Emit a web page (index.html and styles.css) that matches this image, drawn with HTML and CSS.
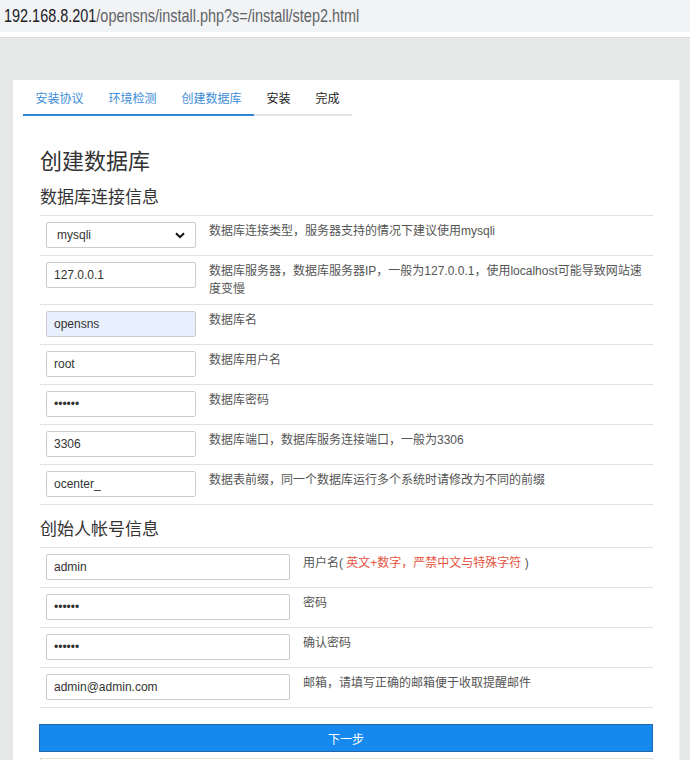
FILE: index.html
```html
<!DOCTYPE html>
<html lang="zh-CN">
<head>
<meta charset="utf-8">
<title>OpenSNS 安装 - 创建数据库</title>
<link rel="stylesheet" href="styles.css">
</head>
<body>
<div class="urlbar"><span class="url"><span class="host">192.168.8.201</span>/opensns/install.php?s=/install/step2.html</span></div>
<div class="urlgap"></div>
<div class="page">
  <div class="card">
    <ul class="steps">
      <li class="done">安装协议</li>
      <li class="done">环境检测</li>
      <li class="done">创建数据库</li>
      <li>安装</li>
      <li>完成</li>
    </ul>
    <div class="content">
      <h2 class="title">创建数据库</h2>
      <h3 class="section">数据库连接信息</h3>
      <table class="form-table db">
        <tr>
          <td class="field"><select class="control select"><option>mysqli</option></select></td>
          <td class="desc">数据库连接类型，服务器支持的情况下建议使用mysqli</td>
        </tr>
        <tr class="tall">
          <td class="field"><input class="control" type="text" value="127.0.0.1"></td>
          <td class="desc">数据库服务器，数据库服务器IP，一般为127.0.0.1，使用localhost可能导致网站速度变慢</td>
        </tr>
        <tr>
          <td class="field"><input class="control autofill" type="text" value="opensns"></td>
          <td class="desc">数据库名</td>
        </tr>
        <tr>
          <td class="field"><input class="control" type="text" value="root"></td>
          <td class="desc">数据库用户名</td>
        </tr>
        <tr>
          <td class="field"><input class="control" type="password" value="123456"></td>
          <td class="desc">数据库密码</td>
        </tr>
        <tr>
          <td class="field"><input class="control" type="text" value="3306"></td>
          <td class="desc">数据库端口，数据库服务连接端口，一般为3306</td>
        </tr>
        <tr>
          <td class="field"><input class="control" type="text" value="ocenter_"></td>
          <td class="desc">数据表前缀，同一个数据库运行多个系统时请修改为不同的前缀</td>
        </tr>
      </table>
      <h3 class="section section-2">创始人帐号信息</h3>
      <table class="form-table admin">
        <tr>
          <td class="field"><input class="control" type="text" value="admin"></td>
          <td class="desc">用户名( <span class="warn">英文+数字，严禁中文与特殊字符</span> )</td>
        </tr>
        <tr>
          <td class="field"><input class="control" type="password" value="123456"></td>
          <td class="desc">密码</td>
        </tr>
        <tr>
          <td class="field"><input class="control" type="password" value="123456"></td>
          <td class="desc">确认密码</td>
        </tr>
        <tr>
          <td class="field"><input class="control" type="text" value="admin@admin.com"></td>
          <td class="desc">邮箱，请填写正确的邮箱便于收取提醒邮件</td>
        </tr>
      </table>
      <button class="btn-primary" type="button">下一步</button>
      <div class="btn-default"></div>
    </div>
  </div>
</div>
</body>
</html>
```
FILE: styles.css
```css
html, body {
  margin: 0;
  padding: 0;
}
body {
  background: #e6e9e8;
  font-family: "Liberation Sans", "Noto Sans CJK SC", sans-serif;
  font-size: 12px;
  color: #333;
  overflow: hidden;
}
.urlbar {
  height: 32px;
  background: #f2f3f4;
  line-height: 32px;
  padding-left: 4px;
  white-space: nowrap;
  overflow: hidden;
}
.url {
  display: inline-block;
  font-size: 19px;
  color: #5f6368;
  transform: scaleX(0.76);
  transform-origin: left center;
}
.host {
  color: #202124;
}
.urlgap {
  height: 5px;
  background: #fff;
  border-bottom: 1px solid #d8dcdc;
}
.page {
  padding-top: 42px;
}
.card {
  margin-left: 13px;
  width: 666px;
  background: #fff;
  min-height: 700px;
  padding-left: 10px;
  box-sizing: border-box;
  box-shadow: 1px 0 0 #f3f6f6;
}
.steps {
  list-style: none;
  margin: 0;
  padding: 0;
  display: inline-flex;
  border-bottom: 2px solid #e4e4e4;
}
.steps li {
  padding: 10px 12.5px 6px;
  line-height: 18px;
  font-size: 12px;
  color: #222;
  margin-bottom: -2px;
  border-bottom: 2px solid transparent;
}
.steps li.done {
  color: #3d8dd8;
  border-bottom-color: #2f86d3;
}
.content {
  padding: 0 26px 0 17px;
}
.title {
  margin: 34px 0 0;
  font-size: 22px;
  line-height: 24px;
  font-weight: normal;
  color: #333;
}
.section {
  margin: 14px 0 0;
  font-size: 17px;
  line-height: 20px;
  font-weight: normal;
  color: #333;
}
.section-2 {
  margin-top: 15px;
}
.form-table {
  margin-top: 7px;
  width: 613px;
  border-collapse: separate;
  border-spacing: 0;
}
.form-table td {
  border-top: 1px solid #e0e0e0;
  padding: 6px 6px 7px;
  vertical-align: top;
}
.form-table tr.tall td {
  padding-bottom: 6px;
}
.form-table tr:last-child td {
  border-bottom: 1px solid #e0e0e0;
}
.db .field {
  width: 150px;
}
.admin .field {
  width: 244px;
}
.desc {
  line-height: 18px;
  color: #555;
  padding-left: 7px !important;
}
.warn {
  color: #e4533d;
}
.control {
  display: block;
  box-sizing: border-box;
  width: 100%;
  height: 26px;
  margin: 0;
  padding: 0 7px;
  border: 1px solid #ccc;
  border-radius: 2px;
  background: #fff;
  font-family: "Liberation Sans", sans-serif;
  font-size: 12px;
  color: #333;
  outline: none;
}
.autofill {
  background: #e8f0fe;
}
.select {
  appearance: none;
  -webkit-appearance: none;
  padding-left: 10px;
  background: #fff url("data:image/svg+xml,%3Csvg xmlns='http://www.w3.org/2000/svg' width='10' height='7' viewBox='0 0 10 7'%3E%3Cpath d='M1 1.2l4 4 4-4' fill='none' stroke='%23111' stroke-width='2'/%3E%3C/svg%3E") no-repeat right 10px center;
}
.btn-primary {
  display: block;
  margin: 16px 0 0 -1px;
  width: 614px;
  height: 28px;
  background: #1589ee;
  border: 1px solid #2267a8;
  border-radius: 0;
  color: #fff;
  font-family: "Liberation Sans", "Noto Sans CJK SC", sans-serif;
  font-size: 12px;
  padding: 0;
}
.btn-default {
  margin-top: 6px;
  width: 613px;
  height: 28px;
  border-top: 1px solid #e6dfd3;
  border-left: 1px solid #e6dfd3;
  border-right: 1px solid #e6dfd3;
  box-sizing: border-box;
}
```
